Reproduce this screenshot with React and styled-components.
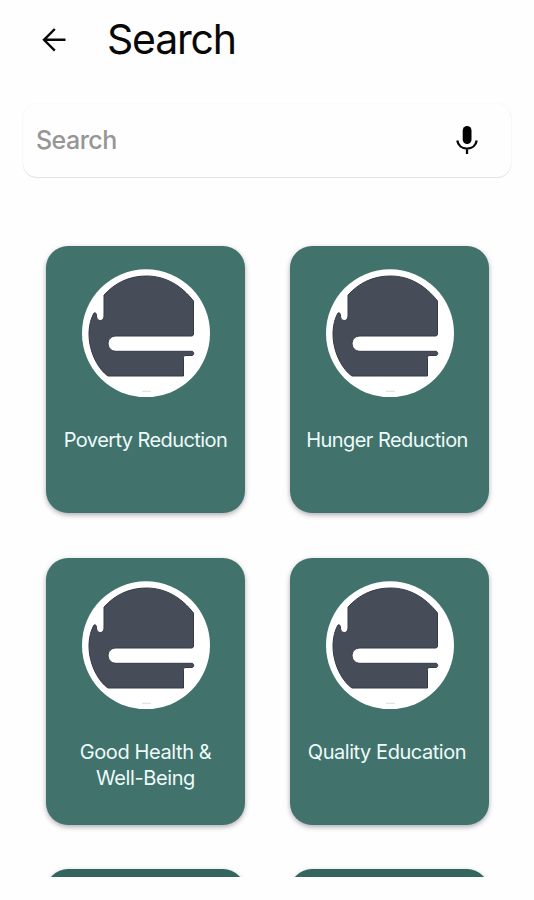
import React from "react";
import styled, { createGlobalStyle } from "styled-components";

const GlobalStyle = createGlobalStyle`
  * { box-sizing: border-box; }
  body { margin: 0; background: #fefefe; font-family: "Inter", "Liberation Sans", sans-serif; }
`;

const Screen = styled.main`
  width: 534px;
  height: 900px;
  overflow: hidden;
  background: #fefefe;
`;

const Header = styled.header`
  display: flex;
  align-items: center;
  gap: 41px;
  height: 78px;
  padding-left: 42px;
`;

const BackButton = styled.button`
  display: flex;
  padding: 2px 0 0;
  border: 0;
  background: none;
`;

const Title = styled.h1`
  margin: 0;
  color: #080808;
  font-size: 41px;
  font-weight: 400;
  line-height: 50px;
  letter-spacing: -1.2px;
`;

const SearchBar = styled.label`
  display: flex;
  align-items: center;
  justify-content: space-between;
  width: 488px;
  height: 73px;
  margin: 26px 0 0 23px;
  padding: 0 33px 2px 13px;
  border-radius: 14px;
  background: #fefefe;
  box-shadow: 0 1px 1px rgba(0, 0, 0, 0.1), 0 0 2px rgba(0, 0, 0, 0.06);
`;

const SearchInput = styled.input`
  width: 300px;
  padding: 0;
  border: 0;
  outline: 0;
  background: transparent;
  font-family: inherit;
  font-size: 25px;
  font-weight: 450;
  letter-spacing: -0.55px;
  &::placeholder { color: #969696; opacity: 1; }
`;

const Results = styled.section`
  padding: 69px 0 0 46px;
  display: grid;
  grid-template-columns: 199px 199px;
  grid-auto-rows: 267px;
  gap: 44.5px 45px;
`;

const Viewport = styled.div`
  height: 700px;
  overflow: hidden;
`;

const Card = styled.article`
  display: flex;
  flex-direction: column;
  align-items: center;
  padding-top: 23px;
  border-radius: 22px;
  background: ${(p) => (p.$shaded ? "#34655f" : "#41726c")};
  box-shadow: 0 2px 5px rgba(20, 15, 35, 0.34);
`;

const Label = styled.h2`
  margin: 30px 0 0;
  padding-right: ${(p) => p.$inset}px;
  color: #edfbfa;
  font-size: 20px;
  font-weight: 400;
  line-height: 26px;
  letter-spacing: ${(p) => p.$tracking}px;
  text-align: center;
  white-space: pre-line;
`;

const Emblem = () => (
  <svg width="128" height="128" viewBox="0 0 128 128" aria-hidden="true">
    <circle cx="64" cy="64.3" r="64" fill="#fff" />
    <path
      fill="#464d59"
      stroke="#353a49"
      strokeWidth="1"
      d="M22 26C33 14 47 7 64.5 7C83 7 99 16 111.5 32V65Q111.5 67 109.5 67H34C23.5 67 23.5 82 34 82.3H110C112.3 82.3 112.3 86.5 110 86.5H103Q101.5 86.5 101.5 88.5V107H26C17 101 7 84 7 65C7 57 9 49 12 44Q14.5 43 14.5 47C14.5 53 22 53 22 47Z"
    />
    <path d="M60 122.3h9" stroke="#ddd" strokeWidth="1" />
  </svg>
);

const goals = [
  { name: "Poverty Reduction", tracking: -0.58, inset: 0 },
  { name: "Hunger Reduction", tracking: -0.55, inset: 5 },
  { name: "Good Health &\nWell-Being", tracking: -0.4, inset: 0 },
  { name: "Quality Education", tracking: -0.45, inset: 5 },
  { name: "", shaded: true },
  { name: "", shaded: true },
];

export default function App() {
  return (
    <>
      <GlobalStyle />
      <Screen>
        <Header>
          <BackButton aria-label="Back">
            <svg width="24" height="24" viewBox="0 0 24 24" fill="none" stroke="#080808" strokeWidth="2.4">
              <path d="M23.5 11.8H2M12.8 1L2 11.8L12.8 22.6" />
            </svg>
          </BackButton>
          <Title>Search</Title>
        </Header>
        <SearchBar>
          <SearchInput placeholder="Search" />
          <svg width="22" height="30" viewBox="0 0 22 30" fill="none">
            <rect x="6.7" y="1" width="8.8" height="18" rx="4.4" fill="#000" />
            <path d="M1.3 15.5C2 20.5 6 23.6 11 23.6S20 20.5 20.7 15.5M11 23.5V29" stroke="#080808" strokeWidth="2.3" />
          </svg>
        </SearchBar>
        <Viewport>
          <Results>
            {goals.map((goal, i) => (
              <Card key={i} $shaded={goal.shaded}>
                <Emblem />
                <Label $tracking={goal.tracking || 0} $inset={goal.inset || 0}>{goal.name}</Label>
              </Card>
            ))}
          </Results>
        </Viewport>
      </Screen>
    </>
  );
}
